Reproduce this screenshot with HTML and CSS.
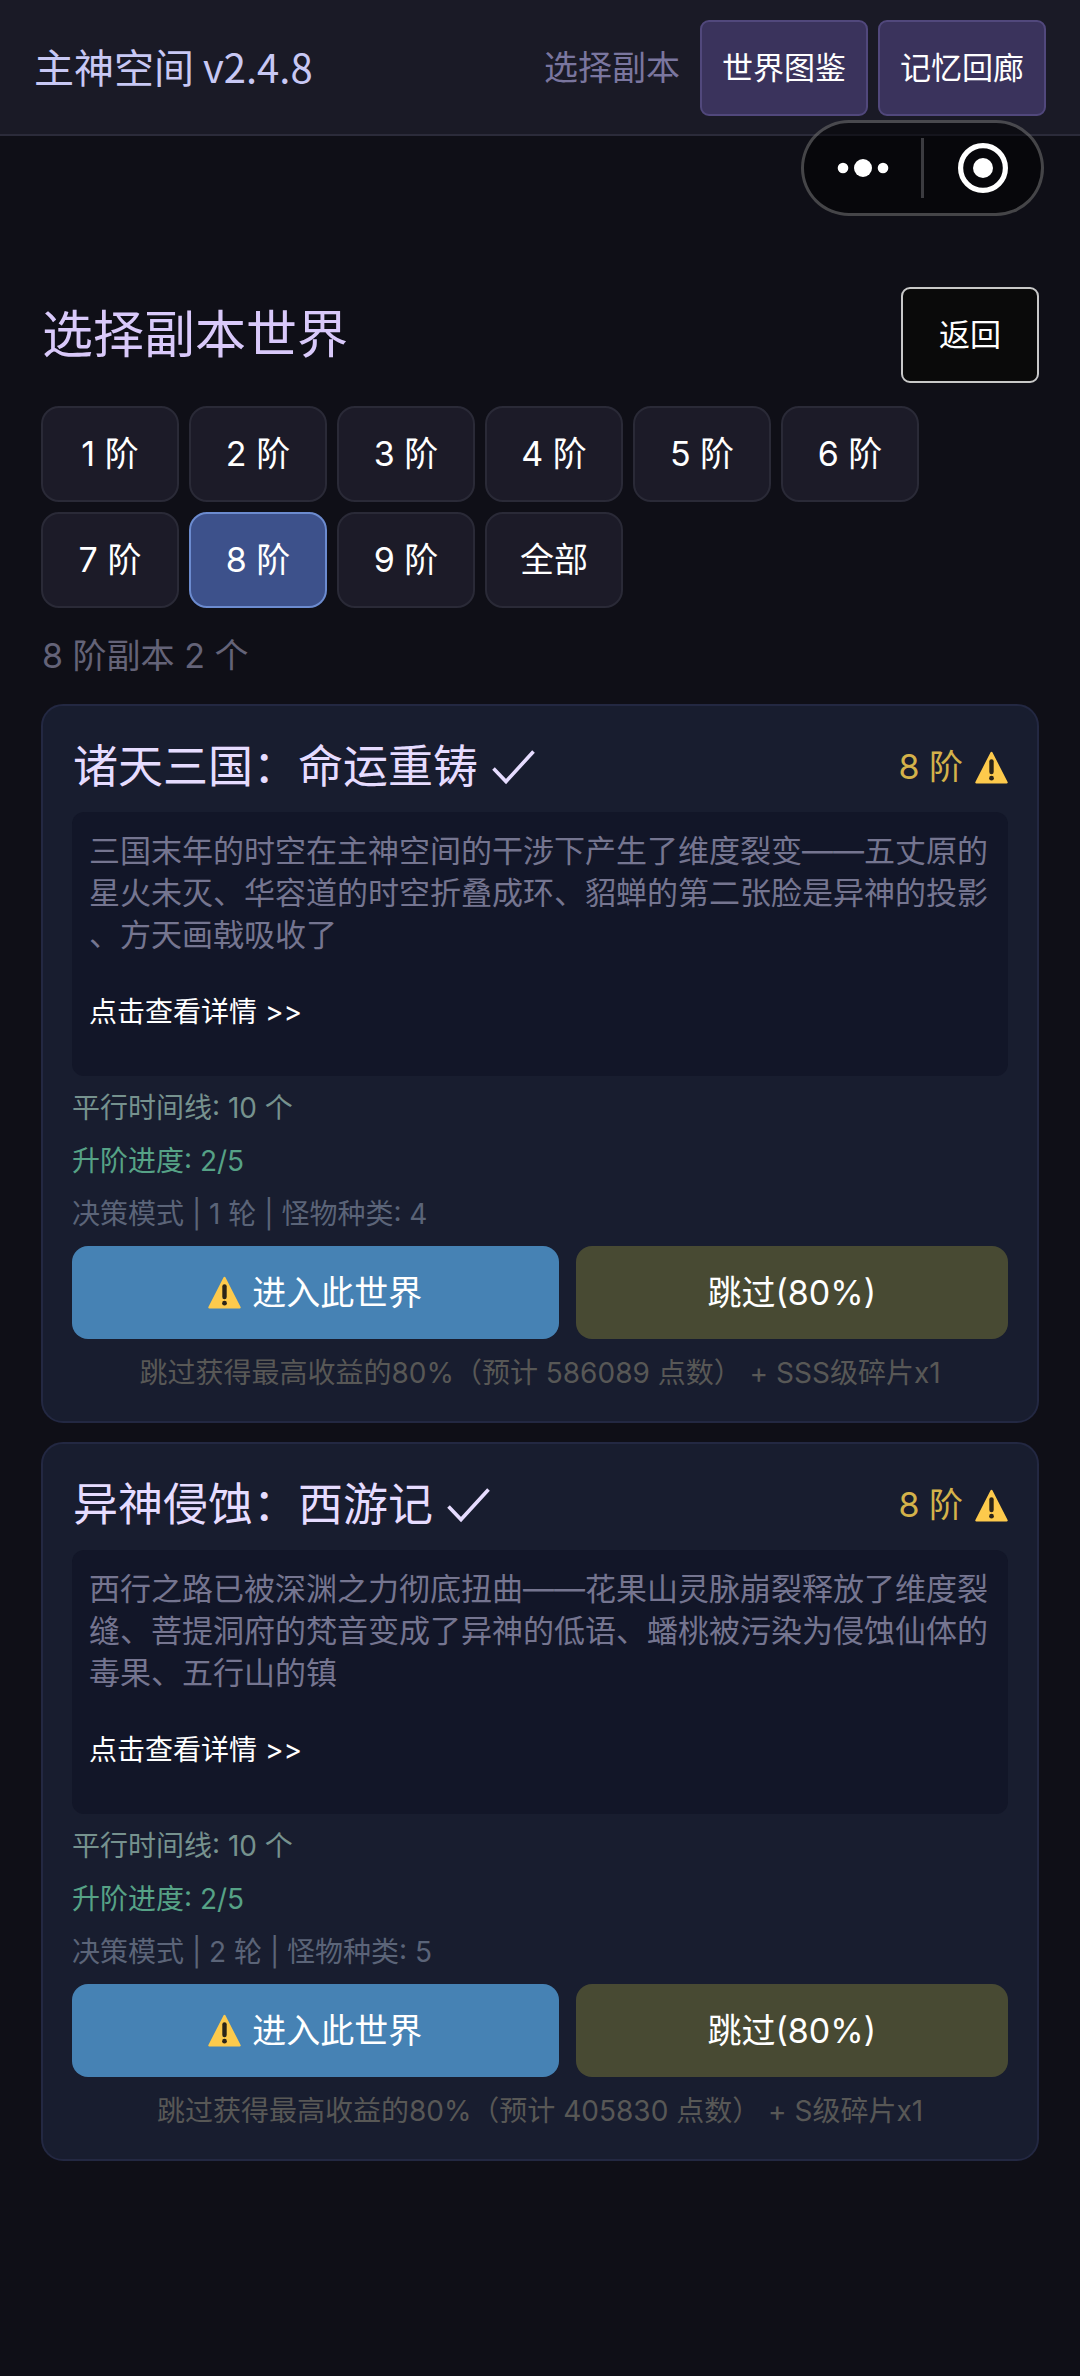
FILE: index.html
```html
<!DOCTYPE html>
<html lang="zh-CN">
<head>
<meta charset="utf-8">
<meta name="viewport" content="width=device-width, initial-scale=1">
<title>主神空间</title>
<link rel="stylesheet" href="styles.css">
</head>
<body>
<svg class="sprite" aria-hidden="true">
  <symbol id="warn" viewBox="0 0 33 33">
    <path d="M15.6 1.2a1 1 0 0 1 1.8 0L32.6 31a1 1 0 0 1-.9 1.5H1.3A1 1 0 0 1 .4 31z" fill="#fdca4c"/>
    <path d="M16.5 10.5v10.5" stroke="#2b2418" stroke-width="4.4" stroke-linecap="round"/>
    <circle cx="16.5" cy="27.2" r="2.4" fill="#2b2418"/>
  </symbol>
  <symbol id="check" viewBox="0 0 43 36">
    <path d="M1.5 19.5 14 32.5 41.5 2.5" fill="none" stroke="currentColor" stroke-width="3.6"/>
  </symbol>
</svg>

<header class="topbar">
  <span class="brand">主神空间 v2.4.8</span>
  <span class="status">选择副本</span>
  <nav class="topnav">
    <button class="nav-btn" type="button">世界图鉴</button>
    <button class="nav-btn" type="button">记忆回廊</button>
  </nav>
  <div class="capsule">
    <button class="capsule-btn" type="button" aria-label="更多">
      <svg width="52" height="20" viewBox="0 0 52 20" fill="#fff"><circle cx="6" cy="10" r="5.3"/><circle cx="26" cy="10" r="9"/><circle cx="46" cy="10" r="5.3"/></svg>
    </button>
    <span class="capsule-line"></span>
    <button class="capsule-btn" type="button" aria-label="关闭">
      <svg width="50" height="50" viewBox="0 0 50 50"><circle cx="25" cy="25" r="22.4" fill="none" stroke="#fff" stroke-width="5.2"/><circle cx="25" cy="25" r="10" fill="#fff"/></svg>
    </button>
  </div>
</header>

<main class="page">
  <div class="page-head">
    <h1 class="page-title">选择副本世界</h1>
    <button class="back-btn" type="button">返回</button>
  </div>

  <div class="tiers">
    <button class="tier" type="button">1 阶</button>
    <button class="tier" type="button">2 阶</button>
    <button class="tier" type="button">3 阶</button>
    <button class="tier" type="button">4 阶</button>
    <button class="tier" type="button">5 阶</button>
    <button class="tier" type="button">6 阶</button>
    <button class="tier" type="button">7 阶</button>
    <button class="tier tier-active" type="button" aria-pressed="true">8 阶</button>
    <button class="tier" type="button">9 阶</button>
    <button class="tier" type="button">全部</button>
  </div>

  <p class="count">8 阶副本 2 个</p>

  <div class="cards">
    <article class="card">
      <div class="card-head">
        <h2 class="card-title">诸天三国：命运重铸<svg class="check"><use href="#check"/></svg></h2>
        <span class="badge">8 阶<svg class="warn"><use href="#warn"/></svg></span>
      </div>
      <div class="desc">
        <p class="desc-text">三国末年的时空在主神空间的干涉下产生了维度裂变——五丈原的星火未灭、华容道的时空折叠成环、貂蝉的第二张脸是异神的投影、方天画戟吸收了</p>
        <button class="more" type="button">点击查看详情 &gt;&gt;</button>
      </div>
      <div class="stats">
        <p class="stat stat-timeline">平行时间线: 10 个</p>
        <p class="stat stat-progress">升阶进度: 2/5</p>
        <p class="stat stat-mode">决策模式 | 1 轮 | 怪物种类: 4</p>
      </div>
      <div class="actions">
        <button class="action enter" type="button"><svg class="warn"><use href="#warn"/></svg>进入此世界</button>
        <button class="action skip" type="button">跳过(80%)</button>
      </div>
      <p class="hint">跳过获得最高收益的80%（预计 586089 点数） + SSS级碎片x1</p>
    </article>

    <article class="card">
      <div class="card-head">
        <h2 class="card-title">异神侵蚀：西游记<svg class="check"><use href="#check"/></svg></h2>
        <span class="badge">8 阶<svg class="warn"><use href="#warn"/></svg></span>
      </div>
      <div class="desc">
        <p class="desc-text">西行之路已被深渊之力彻底扭曲——花果山灵脉崩裂释放了维度裂缝、菩提洞府的梵音变成了异神的低语、蟠桃被污染为侵蚀仙体的毒果、五行山的镇</p>
        <button class="more" type="button">点击查看详情 &gt;&gt;</button>
      </div>
      <div class="stats">
        <p class="stat stat-timeline">平行时间线: 10 个</p>
        <p class="stat stat-progress">升阶进度: 2/5</p>
        <p class="stat stat-mode">决策模式 | 2 轮 | 怪物种类: 5</p>
      </div>
      <div class="actions">
        <button class="action enter" type="button"><svg class="warn"><use href="#warn"/></svg>进入此世界</button>
        <button class="action skip" type="button">跳过(80%)</button>
      </div>
      <p class="hint">跳过获得最高收益的80%（预计 405830 点数） + S级碎片x1</p>
    </article>
  </div>
</main>
</body>
</html>
```
FILE: styles.css
```css
* {
  box-sizing: border-box;
}

body {
  margin: 0;
  min-height: 100vh;
  background: #0f0f17;
  color: #fff;
  font-family: Inter, "Noto Sans CJK SC", sans-serif;
  font-weight: 400;
}

button {
  margin: 0;
  padding: 0;
  border: 0;
  background: none;
  color: #fff;
  font: inherit;
  line-height: 48px;
  cursor: pointer;
}

h1,
h2,
p {
  margin: 0;
  font-weight: inherit;
}

.sprite {
  display: none;
}

/* Top bar */
.topbar {
  position: relative;
  display: flex;
  align-items: center;
  padding: 20px 34px 18px;
  background: #1a1a26;
  border-bottom: 2px solid #2b2b3a;
}

.brand {
  flex: 1;
  padding-bottom: 4px;
  color: #c8c8f4;
  font-family: "Noto Sans CJK SC", sans-serif;
  font-size: 40px;
  line-height: 60px;
}

.status {
  margin-right: 20px;
  color: #7a769f;
  font-size: 34px;
  line-height: 48px;
}

.topnav {
  display: flex;
  gap: 10px;
}

.nav-btn {
  height: 96px;
  padding: 0 20px;
  border: 2px solid #51487c;
  border-radius: 9px;
  background: #3a335c;
  font-size: 31px;
}

/* Floating system capsule */
.capsule {
  position: absolute;
  top: 120px;
  right: 36px;
  display: flex;
  align-items: center;
  width: 243px;
  height: 96px;
  border: 3px solid rgba(255, 255, 255, 0.25);
  border-radius: 48px;
  background: rgba(0, 0, 0, 0.5);
}

.capsule-btn {
  display: flex;
  flex: 1;
  align-items: center;
  justify-content: center;
  height: 90px;
}

.capsule-line {
  width: 3px;
  height: 60px;
  background: #3b3b40;
}

/* Page */
.page {
  padding: 151px 41px 96px;
}

.page-head {
  display: flex;
  align-items: center;
  justify-content: space-between;
}

.page-title {
  padding-left: 1px;
  color: #d9c9fa;
  font-size: 51px;
  line-height: 72px;
}

.back-btn {
  width: 138px;
  height: 96px;
  border: 2px solid #c8c8c8;
  border-radius: 9px;
  background: #0a0a0a;
  font-size: 31px;
}

.tiers {
  display: flex;
  flex-wrap: wrap;
  gap: 10px;
  margin-top: 23px;
}

.tier {
  min-width: 138px;
  height: 96px;
  border: 2px solid #2a2a37;
  border-radius: 18px;
  background: #1c1b28;
  font-size: 34px;
}

.tier-active {
  border-color: #6c8bcf;
  background: #3d518b;
}

.count {
  margin: 24px 0;
  padding-left: 1px;
  color: #646378;
  font-size: 34px;
  line-height: 48px;
}

/* Dungeon cards */
.cards {
  display: grid;
  gap: 19px;
}

.card {
  padding: 29px;
  border: 2px solid #232842;
  border-radius: 22px;
  background: #181d2f;
}

.card-head {
  display: flex;
  align-items: center;
  justify-content: space-between;
  margin-bottom: 13px;
}

.card-title {
  display: flex;
  align-items: center;
  gap: 14px;
  padding-left: 1px;
  color: #e6dcff;
  font-size: 45px;
  line-height: 64px;
}

.check {
  width: 43px;
  height: 36px;
}

.badge {
  display: flex;
  align-items: center;
  gap: 12px;
  color: #d4b24a;
  font-size: 34px;
  line-height: 48px;
}

.warn {
  width: 33px;
  height: 33px;
}

.desc {
  padding: 18px 17px 16px;
  border-radius: 12px;
  background: #121628;
}

.desc-text {
  color: #757590;
  font-size: 31px;
  line-height: 42px;
  line-break: anywhere;
}

.more {
  display: block;
  height: 96px;
  margin-top: 8px;
  font-size: 28px;
}

.stats {
  display: grid;
  gap: 15px;
  margin: 13px 0;
}

.stat,
.hint {
  font-size: 28px;
  line-height: 38px;
}

.stat-timeline {
  color: #76928e;
}

.stat-progress {
  color: #56a286;
}

.stat-mode {
  color: #5b6478;
}

.actions {
  display: grid;
  grid-template-columns: 9fr 8fr;
  gap: 17px;
}

.action {
  display: flex;
  align-items: center;
  justify-content: center;
  gap: 11px;
  height: 93px;
  border-radius: 16px;
  font-size: 34px;
}

.enter {
  background: #4682b4;
}

.skip {
  background: #484a33;
}

.hint {
  margin-top: 15px;
  color: #585856;
  text-align: center;
}
```
